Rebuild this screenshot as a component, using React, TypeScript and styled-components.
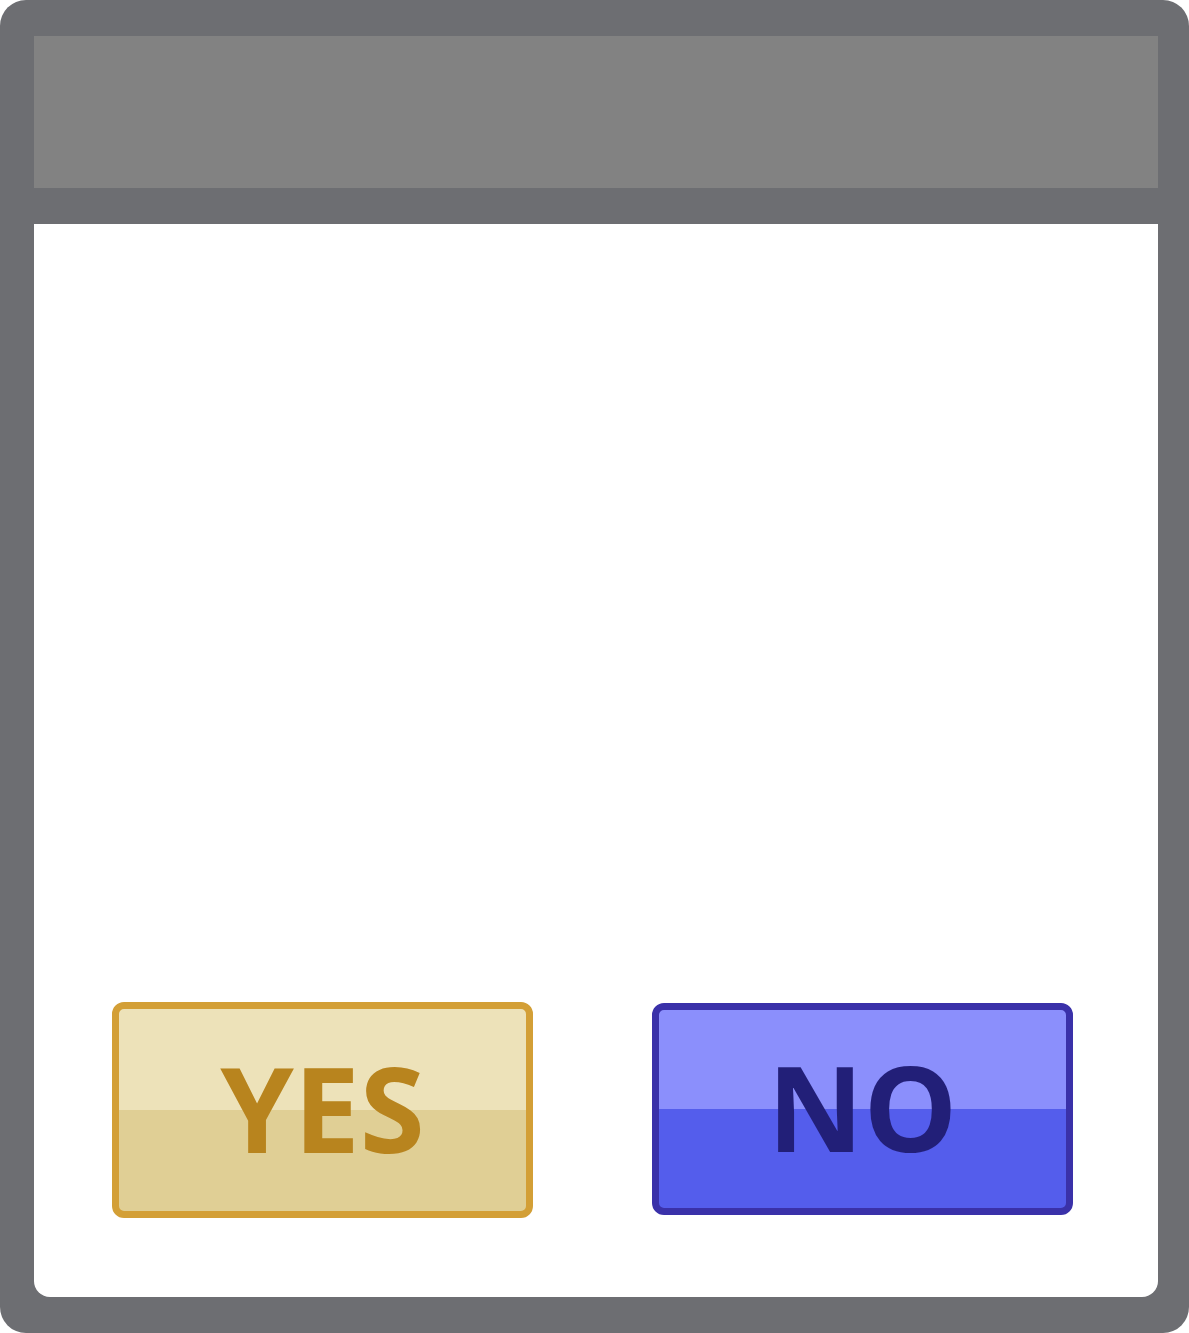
import React from "react";
import styled, { createGlobalStyle } from "styled-components";

const GlobalStyle = createGlobalStyle`
  html, body {
    margin: 0;
    padding: 0;
    background: #ffffff;
  }
  * {
    box-sizing: border-box;
  }
`;

const Frame = styled.div`
  width: 1189px;
  height: 1333px;
  background: #6d6e72;
  border-radius: 26px;
  padding: 36px 31px 36px 34px;
  display: flex;
  flex-direction: column;
  gap: 36px;
`;

const TitleBar = styled.div`
  height: 152px;
  background: #828282;
`;

const Body = styled.div`
  flex: 1;
  background: #ffffff;
  border-radius: 0 0 16px 16px;
  display: flex;
  flex-direction: column;
  justify-content: flex-end;
  padding: 0 0 79px 78px;
`;

const ButtonRow = styled.div`
  display: flex;
  gap: 119px;
`;

type Tone = "yes" | "no";

const palette: Record<Tone, { border: string; top: string; bottom: string; text: string }> = {
  yes: { border: "#d39f36", top: "#ede2b9", bottom: "#e0cf95", text: "#b8841e" },
  no: { border: "#3a31a9", top: "#8b8ffc", bottom: "#545dec", text: "#221f78" },
};

const DialogButton = styled.button<{ $tone: Tone }>`
  width: 421px;
  height: ${(p) => (p.$tone === "yes" ? 216 : 212)}px;
  margin-top: ${(p) => (p.$tone === "yes" ? 0 : 1)}px;
  border: 7px solid ${(p) => palette[p.$tone].border};
  border-radius: 12px;
  background: linear-gradient(
    to bottom,
    ${(p) => palette[p.$tone].top} 0,
    ${(p) => palette[p.$tone].top} 50%,
    ${(p) => palette[p.$tone].bottom} 50%,
    ${(p) => palette[p.$tone].bottom} 100%
  );
  color: ${(p) => palette[p.$tone].text};
  font-family: "Open Sans", "DejaVu Sans", sans-serif;
  font-weight: 700;
  font-size: 118px;
  line-height: 1;
  padding: 0 0 4px 0;
  display: flex;
  align-items: center;
  justify-content: center;
  cursor: pointer;
`;

export default function App() {
  return (
    <>
      <GlobalStyle />
      <Frame>
        <TitleBar />
        <Body>
          <ButtonRow>
            <DialogButton $tone="yes">YES</DialogButton>
            <DialogButton $tone="no">NO</DialogButton>
          </ButtonRow>
        </Body>
      </Frame>
    </>
  );
}
